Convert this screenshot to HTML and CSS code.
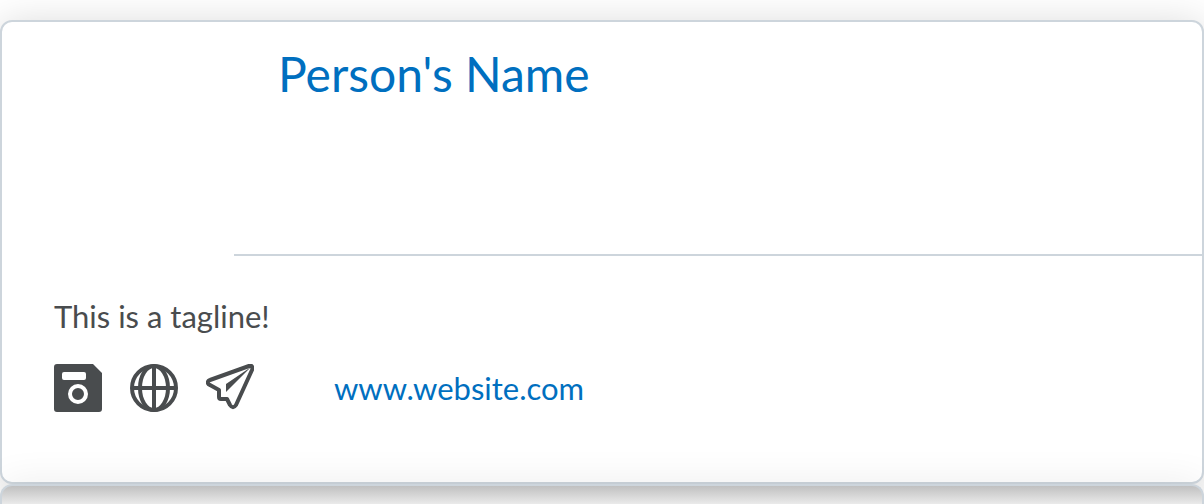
FILE: index.html
```html
<!DOCTYPE html>
<html lang="en">
<head>
<meta charset="utf-8">
<meta name="viewport" content="width=device-width, initial-scale=1">
<title>Person's Name</title>
<link rel="stylesheet" href="styles.css">
</head>
<body>
<main class="cards">
  <article class="card">
    <header class="card-header">
      <h1 class="name"><a class="link" href="#profile">Person's Name</a></h1>
    </header>
    <div class="card-body">
      <p class="tagline">This is a tagline!</p>
      <div class="contact">
        <button class="icon-button" type="button" aria-label="Save">
          <svg class="icon" viewBox="0 0 48 48" aria-hidden="true">
            <path fill="currentColor" fill-rule="evenodd" d="M3 0H39L48 9V45a3 3 0 0 1-3 3H3a3 3 0 0 1-3-3V3a3 3 0 0 1 3-3ZM10 8a2 2 0 0 0-2 2v4a2 2 0 0 0 2 2h20a2 2 0 0 0 2-2v-4a2 2 0 0 0-2-2ZM24 20a10 10 0 1 0 0 20a10 10 0 1 0 0-20ZM24 24a6 6 0 1 1 0 12a6 6 0 1 1 0-12Z"/>
          </svg>
        </button>
        <button class="icon-button" type="button" aria-label="Website">
          <svg class="icon" viewBox="0 0 48 48" aria-hidden="true">
            <g fill="none" stroke="currentColor" stroke-width="4">
              <circle cx="24" cy="24" r="22"/>
              <ellipse cx="24" cy="24" rx="14" ry="22"/>
              <path d="M24 2V46M2 24H46"/>
            </g>
          </svg>
        </button>
        <button class="icon-button" type="button" aria-label="Send message">
          <svg class="icon" viewBox="0 0 48 48" aria-hidden="true">
            <path fill="none" stroke="currentColor" stroke-width="4" stroke-linejoin="round" d="M43 2L4 16C1 17 1 20 4 21L13 26V33Q13 35 15 35H21L24 41C26 44 28 44 30 41L46 6C47 3 46 1 43 2Z"/>
            <path fill="currentColor" d="M45 3L20 20V28Z"/>
          </svg>
        </button>
        <a class="link website" href="#website">www.website.com</a>
      </div>
    </div>
  </article>
  <article class="card card-next" aria-label="Next profile"></article>
</main>
</body>
</html>
```
FILE: styles.css
```css
* {
  box-sizing: border-box;
}

body {
  margin: 0;
  background: #fff;
  color: #494c4e;
  font-family: Lato, sans-serif;
  font-size: 31px;
  line-height: 40px;
}

.cards {
  display: flex;
  flex-direction: column;
  min-height: 100vh;
  padding-top: 20px;
  overflow: hidden;
}

.card {
  border: 2px solid #cdd5dc;
  border-radius: 12px;
  background: #fff;
  box-shadow: 0 4px 40px rgba(0, 0, 0, 0.16);
}

.card-next {
  flex: 1;
  border-bottom: 0;
  border-radius: 12px 12px 0 0;
  background: linear-gradient(#c0c0c0, #eaeaea 18px, #fff 40px);
  box-shadow: 0 4px 40px rgba(0, 0, 0, 0.12);
}

.card-header {
  min-height: 234px;
  margin-left: 232px;
  padding: 22px 44px;
  border-bottom: 2px solid #cdd5dc;
}

.name {
  margin: 0;
  font-size: 48px;
  font-weight: 400;
  line-height: 60px;
}

.link {
  color: #006fbf;
  text-decoration: none;
}

.card-body {
  padding: 40px 52px 70px;
}

.tagline {
  margin: 0 0 28px;
}

.contact {
  display: flex;
  align-items: center;
  gap: 28px;
}

.icon-button {
  padding: 0;
  border: 0;
  background: none;
  color: inherit;
  cursor: pointer;
}

.icon {
  display: block;
  width: 48px;
  height: 48px;
}

.website {
  margin-left: 52px;
}
```
